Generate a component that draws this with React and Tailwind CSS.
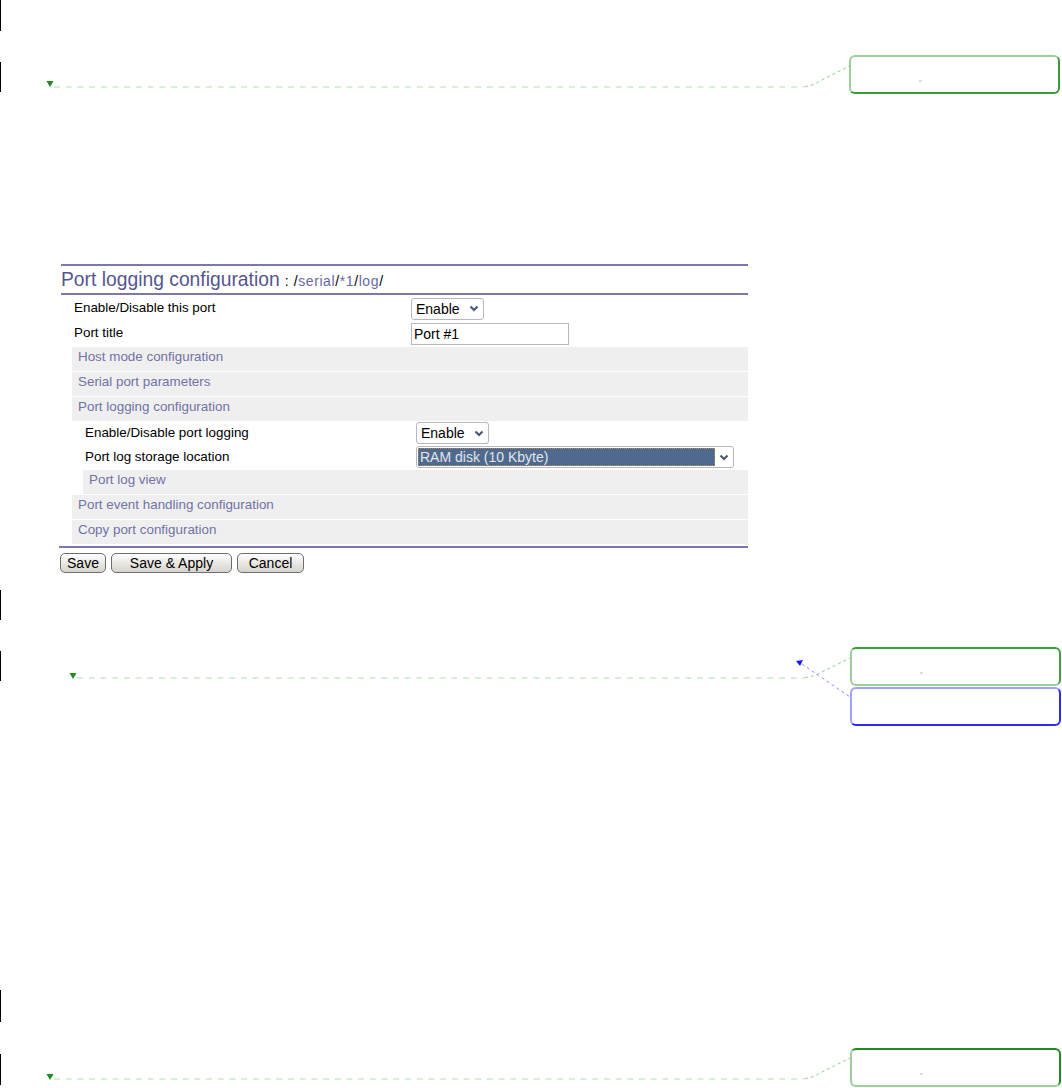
import React from 'react';

const Chevron = () => (
  <svg width="10" height="7" viewBox="0 0 10 7">
    <path d="M1.5 1.5 L5 5 L8.5 1.5" fill="none" stroke="#4b5876" strokeWidth="2.2" />
  </svg>
);

const Select = ({ value }) => (
  <div className="flex h-[22px] w-[73px] items-center rounded-[3px] border border-[#b4b8c0] bg-white pl-[4px] pr-[4px] text-[14px] text-black">
    <span className="flex-1 leading-none">{value}</span>
    <Chevron />
  </div>
);

const MenuRow = ({ label, nested }) => (
  <div className={`mt-px h-[24px] bg-[#efefef] text-[13.4px] leading-[20px] text-[#7272a6] ${nested ? 'ml-[11px] pl-[6px]' : 'pl-[6px]'}`}>
    {label}
  </div>
);

const Balloon = ({ className, dot = true }) => (
  <div className={`absolute h-[39px] w-[211px] rounded-[6px] border-2 bg-white ${className}`}>
    {dot && <span className="absolute left-[68px] top-[23px] h-[2px] w-[3px] bg-[#dedede]" />}
  </div>
);

const Connectors = () => (
  <svg className="pointer-events-none absolute left-0 top-0" width="1062" height="1088">
    {/* section 1 */}
    <polygon points="46.5,81 53.5,81 50,87" fill="#1e8c1e" />
    <line x1="54" y1="87" x2="805" y2="87" stroke="#cde8cd" strokeWidth="1.3" strokeDasharray="6 5.7" />
    <path d="M805 86.5 Q812 86 820 81 L849 66" fill="none" stroke="#8fcc8f" strokeWidth="1" strokeDasharray="3 3" />

    {/* section 2 */}
    <polygon points="69.5,673 76.5,673 73,679" fill="#1e8c1e" />
    <line x1="77" y1="678" x2="805" y2="678" stroke="#cde8cd" strokeWidth="1.3" strokeDasharray="6 5.7" />
    <path d="M805 677.5 Q812 677 820 673 L850 658" fill="none" stroke="#8fcc8f" strokeWidth="1" strokeDasharray="3 3" />
    <polygon points="796,661 803,660 800,666" fill="#1a1aff" />
    <line x1="802" y1="664" x2="850" y2="697" stroke="#8c8cff" strokeWidth="1" strokeDasharray="3 3" />

    {/* section 3 */}
    <polygon points="46.5,1074 53.5,1074 50,1080" fill="#1e8c1e" />
    <line x1="54" y1="1079" x2="805" y2="1079" stroke="#cde8cd" strokeWidth="1.3" strokeDasharray="6 5.7" />
    <path d="M805 1078.5 Q812 1078 820 1073 L850 1058" fill="none" stroke="#8fcc8f" strokeWidth="1" strokeDasharray="3 3" />
  </svg>
);

export default function App() {
  return (
    <div className="relative h-[1088px] w-[1062px] overflow-hidden bg-white font-['Liberation_Sans',Arial,sans-serif] text-black">
      {/* change bars, first block */}
      <div className="h-[31px] w-px bg-black" />
      <div className="mt-[31px] h-[30px] w-px bg-black" />

      {/* pasted screenshot of the web page */}
      <div className="ml-[57px] mt-[172px] h-[316px] w-[693px] bg-white">
        <div className="ml-[4px] mt-[1px] h-[2px] w-[687px] bg-[#7d78ab]" />
        <div className="ml-[4px] flex h-[27px] items-baseline pt-px leading-[26px]">
          <span className="text-[19.3px] text-[#56568f]">Port logging configuration</span>
          <span className="ml-[5px] text-[14px] tracking-[0.6px] text-black">
            : /<span className="text-[#6868a8]">serial</span>/<span className="text-[#6868a8]">*1</span>/<span className="text-[#6868a8]">log</span>/
          </span>
        </div>
        <div className="ml-[4px] h-[2px] w-[687px] bg-[#7d78ab]" />

        <div className="ml-[15px] mt-px w-[676px]">
          <div className="flex h-[25px] items-center pl-[2px]">
            <span className="w-[337px] text-[13.4px]">Enable/Disable this port</span>
            <Select value="Enable" />
          </div>
          <div className="flex h-[25px] items-center pl-[2px]">
            <span className="w-[337px] text-[13.4px]">Port title</span>
            <div className="flex h-[22px] w-[158px] items-center border border-[#b8b8b8] bg-white pl-[2px] text-[14px] leading-none">Port #1</div>
          </div>

          <MenuRow label="Host mode configuration" />
          <MenuRow label="Serial port parameters" />
          <MenuRow label="Port logging configuration" />

          <div className="flex h-[24px] items-center pl-[13px]">
            <span className="w-[331px] text-[13.4px]">Enable/Disable port logging</span>
            <Select value="Enable" />
          </div>
          <div className="flex h-[24px] items-center pl-[13px]">
            <span className="w-[331px] text-[13.4px]">Port log storage location</span>
            <div className="flex h-[22px] w-[318px] items-center rounded-[3px] border border-[#b4b8c0] bg-white p-px pr-[4px]">
              <div className="flex h-full flex-1 items-center border border-dotted border-[#b08a5a] bg-[#4f6a8e] pl-[1px] text-[14px] leading-none text-[#e2e4ea]">
                RAM disk (10 Kbyte)
              </div>
              <span className="ml-[4px]"><Chevron /></span>
            </div>
          </div>

          <MenuRow label="Port log view" nested />
          <MenuRow label="Port event handling configuration" />
          <MenuRow label="Copy port configuration" />
        </div>

        <div className="ml-[2px] mt-[2px] h-[2px] w-[689px] bg-[#7d78ab]" />

        <div className="ml-[3px] mt-[5px] flex gap-[4px] text-[14px]">
          <button className="h-[20px] w-[46px] rounded-[5px] border border-[#6e6e6e] bg-linear-to-b from-white to-[#d6d3cc] leading-none">Save</button>
          <button className="ml-px h-[20px] w-[121px] rounded-[5px] border border-[#6e6e6e] bg-linear-to-b from-white to-[#d6d3cc] leading-none">Save &amp; Apply</button>
          <button className="ml-px h-[20px] w-[67px] rounded-[5px] border border-[#6e6e6e] bg-linear-to-b from-white to-[#d6d3cc] leading-none">Cancel</button>
        </div>
      </div>

      {/* change bars, second block */}
      <div className="mt-[10px] h-[30px] w-px bg-black" />
      <div className="mt-[31px] h-[30px] w-px bg-black" />

      {/* change bars, third block */}
      <div className="mt-[309px] h-[32px] w-px bg-black" />
      <div className="mt-[32px] h-[31px] w-px bg-black" />

      <Connectors />

      <Balloon className="left-[849px] top-[55px] border-[#9ccf9c] border-b-[#3a9a3a] border-r-[#3a9a3a]" />
      <Balloon className="left-[850px] top-[647px] border-[#3f9f3f] border-b-[#9ccf9c] border-l-[#9ccf9c]" />
      <Balloon className="left-[850px] top-[687px] border-[#2a2aff] border-l-[#a0a0ff] border-t-[#a0a0ff]" dot={false} />
      <Balloon className="left-[850px] top-[1048px] border-[#1e8c1e] border-b-[#9ccf9c] border-l-[#9ccf9c]" />
    </div>
  );
}
